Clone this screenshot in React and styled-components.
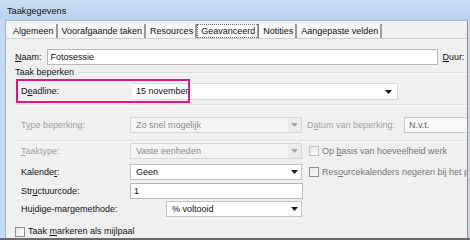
import styled, { createGlobalStyle } from "styled-components";

const GlobalStyle = createGlobalStyle`
  html, body {
    margin: 0;
    padding: 0;
    background: #f0f0f0;
  }
`;

const Arrow = ({ muted }) => (
  <svg width="7" height="4" viewBox="0 0 7 4">
    <polygon points="0,0 7,0 3.5,4" fill={muted ? "#a8a8a8" : "#1a1a1a"} />
  </svg>
);

const App = () => {
  const tabs = ["Algemeen", "Voorafgaande taken", "Resources", "Geavanceerd", "Notities", "Aangepaste velden"];

  return (
    <>
      <GlobalStyle />
      <Window>
        <TitleBar>Taakgegevens</TitleBar>
        <Frame>
          <Body>
            <TabStrip>
              {tabs.map((t) => (
                <Tab key={t} $active={t === "Geavanceerd"}>
                  <span>{t}</span>
                </Tab>
              ))}
            </TabStrip>
            <Panel>
              <NaamRow>
                <Label>
                  <Key>N</Key>aam:
                </Label>
                <TextBox $width={391}>Fotosessie</TextBox>
                <Label>
                  <Key>D</Key>uur:
                </Label>
              </NaamRow>

              <GroupHeader>
                <span>Taak beperken</span>
                <GroupLine />
              </GroupHeader>

              <HighlightRow>
                <Highlight />
                <FieldLabel>
                  D<Key>e</Key>adline:
                </FieldLabel>
                <DateBox>
                  <span>15 november</span>
                  <Arrow />
                </DateBox>
              </HighlightRow>

              <Separator $top={4} />

              <FieldRow $top={11}>
                <FieldLabel $disabled>
                  T<Key>y</Key>pe beperking:
                </FieldLabel>
                <Combo $disabled>
                  <span>Zo snel mogelijk</span>
                  <ComboButton $disabled>
                    <Arrow muted />
                  </ComboButton>
                </Combo>
                <SideLabel $disabled>
                  D<Key>a</Key>tum van beperking:
                </SideLabel>
                <NvtBox>N.v.t.</NvtBox>
              </FieldRow>

              <Separator $top={7} />

              <FieldRow $top={1}>
                <FieldLabel $disabled>
                  <Key>T</Key>aaktype:
                </FieldLabel>
                <Combo $disabled>
                  <span>Vaste eenheden</span>
                  <ComboButton $disabled>
                    <Arrow muted />
                  </ComboButton>
                </Combo>
                <Check>
                  <CheckBox $disabled />
                  <span>
                    Op <Key>b</Key>asis van hoeveelheid werk
                  </span>
                </Check>
              </FieldRow>

              <FieldRow $top={5}>
                <FieldLabel>
                  Kalende<Key>r</Key>:
                </FieldLabel>
                <Combo>
                  <span>Geen</span>
                  <ComboButton>
                    <Arrow />
                  </ComboButton>
                </Combo>
                <Check>
                  <CheckBox />
                  <span>
                    Res<Key>o</Key>urcekalenders negeren bij het plannen
                  </span>
                </Check>
              </FieldRow>

              <FieldRow $top={3}>
                <FieldLabel>
                  Str<Key>u</Key>ctuurcode:
                </FieldLabel>
                <TextBox $width={173}>1</TextBox>
              </FieldRow>

              <FieldRow $top={2}>
                <FieldLabel $width={145}>
                  Hu<Key>i</Key>dige-margemethode:
                </FieldLabel>
                <Combo $width={136}>
                  <span>% voltooid</span>
                  <ComboButton>
                    <Arrow />
                  </ComboButton>
                </Combo>
              </FieldRow>

              <Milestone>
                <CheckBox />
                <span>
                  Taak <Key>m</Key>arkeren als mijlpaal
                </span>
              </Milestone>
            </Panel>
          </Body>
        </Frame>
      </Window>
    </>
  );
};

export default App;

const Window = styled.div`
  width: 470px;
  height: 240px;
  overflow: hidden;
  display: flex;
  flex-direction: column;
  font-family: "Liberation Sans", Arial, sans-serif;
  font-size: 9px;
  line-height: 11px;
  color: #111;
  background: #c4dbf3;
  border-bottom: 2px solid #6a6a6a;
  box-sizing: border-box;
`;

const TitleBar = styled.div`
  flex: none;
  height: 20px;
  padding: 3px 0 0 7px;
  box-sizing: border-box;
  display: flex;
  align-items: center;
  font-size: 9.2px;
  color: #111;
  background: linear-gradient(#cadff5, #b8d3ef);
`;

const Frame = styled.div`
  flex: 1;
  display: flex;
  min-height: 0;
  padding: 0 2px 0 5px;
`;

const Body = styled.div`
  flex: 1;
  display: flex;
  flex-direction: column;
  min-width: 0;
  overflow: hidden;
  background: #f0f0f0;
  border-left: 1px solid #9db3cc;
  border-right: 1px solid #8d8d8d;
  border-top: 1px solid #a8bdd4;
`;

const TabStrip = styled.div`
  flex: none;
  display: flex;
  height: 14px;
  margin-top: 3px;
  padding-left: 3px;
  border-bottom: 1px solid #d0d0d0;
`;

const Tab = styled.div`
  display: flex;
  align-items: center;
  padding: 0 2px 0 4px;
  background: ${(p) => (p.$active ? "#fdfdfd" : "#f7f7f7")};
  border-right: 2px solid #9a9a9a;
  outline: ${(p) => (p.$active ? "1px dotted #6f6f6f" : "none")};
  outline-offset: -1px;
  white-space: nowrap;
  color: #111;
`;

const Panel = styled.div`
  flex: 1;
  display: flex;
  flex-direction: column;
  padding: 10px 0 0 9px;
  white-space: nowrap;

  & > * {
    flex-shrink: 0;
  }
`;

const Key = styled.u`
  text-decoration-thickness: 1px;
  text-underline-offset: 1px;
`;

const Label = styled.span`
  flex: none;
`;

const NaamRow = styled.div`
  display: flex;
  align-items: center;
  gap: 5px;
  height: 16px;
`;

const TextBox = styled.div`
  box-sizing: border-box;
  flex: none;
  width: ${(p) => p.$width}px;
  height: 16px;
  padding-left: 3px;
  display: flex;
  align-items: center;
  background: #fff;
  border: 1px solid #b4b7bd;
`;

const GroupHeader = styled.div`
  display: flex;
  align-items: center;
  gap: 4px;
  height: 13px;
  margin-top: 1px;
`;

const GroupLine = styled.div`
  flex: 1;
  height: 1px;
  background: #dcdcdc;
  border-bottom: 1px solid #fbfbfb;
`;

const HighlightRow = styled.div`
  position: relative;
  display: flex;
  align-items: center;
  height: 17px;
  margin-top: 4px;
  padding-left: 6px;
`;

const Highlight = styled.div`
  position: absolute;
  left: 1px;
  top: -4px;
  width: 174px;
  height: 24px;
  box-sizing: border-box;
  border: 2px solid #e1167f;
  pointer-events: none;
`;

const FieldLabel = styled.span`
  width: ${(p) => p.$width || 109}px;
  flex: none;
  color: ${(p) => (p.$disabled ? "#a2a2a2" : "#111")};
`;

const DateBox = styled.div`
  box-sizing: border-box;
  flex: none;
  width: 266px;
  height: 17px;
  margin-left: 2px;
  padding: 0 5px 0 3px;
  display: flex;
  align-items: center;
  justify-content: space-between;
  background: #fff;
  border: 1px solid #d9d9d9;
  border-left-color: #fff;
`;

const Separator = styled.div`
  height: 1px;
  margin-top: ${(p) => p.$top}px;
  background: #dcdcdc;
  border-bottom: 1px solid #fafafa;
`;

const FieldRow = styled.div`
  display: flex;
  align-items: center;
  height: 16px;
  margin-top: ${(p) => p.$top}px;
  padding-left: 6px;
`;

const Combo = styled.div`
  box-sizing: border-box;
  flex: none;
  width: ${(p) => p.$width || 172}px;
  height: 16px;
  display: flex;
  align-items: center;
  justify-content: space-between;
  padding-left: 5px;
  background: ${(p) => (p.$disabled ? "#f4f4f4" : "#fff")};
  border: 1px solid ${(p) => (p.$disabled ? "#d6d6d6" : "#c3c3c3")};
  color: ${(p) => (p.$disabled ? "#8e8e8e" : "#111")};
`;

const ComboButton = styled.div`
  width: 13px;
  height: 100%;
  display: flex;
  align-items: center;
  justify-content: center;
  background: ${(p) => (p.$disabled ? "#ececec" : "transparent")};
`;

const SideLabel = styled.span`
  margin-left: 5px;
  width: 97px;
  flex: none;
  color: ${(p) => (p.$disabled ? "#a2a2a2" : "#111")};
`;

const NvtBox = styled.div`
  box-sizing: border-box;
  width: 70px;
  height: 16px;
  flex: none;
  padding-left: 4px;
  display: flex;
  align-items: center;
  background: #fafafa;
  border: 1px solid #c9c9c9;
  color: #5e5e5e;
`;

const Check = styled.label`
  flex: none;
  display: flex;
  align-items: center;
  gap: 3px;
  margin-left: 7px;
  color: #767676;
`;

const CheckBox = styled.span`
  box-sizing: border-box;
  width: 10px;
  height: 10px;
  flex: none;
  background: linear-gradient(135deg, #e6e6e6, #fcfcfc);
  border: 1px solid ${(p) => (p.$disabled ? "#c2c2c2" : "#8f8f8f")};
`;

const Milestone = styled.label`
  display: flex;
  align-items: center;
  gap: 3px;
  height: 11px;
  margin-top: 9px;
`;
